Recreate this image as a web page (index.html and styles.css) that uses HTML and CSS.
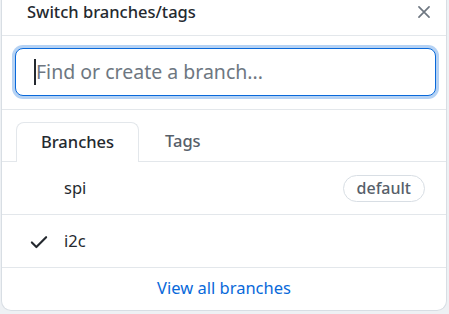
FILE: index.html
```html
<!DOCTYPE html>
<html>
<head>
	<link rel="stylesheet" href="styles.css">
</head>
<body>

	<div class="panel">
		<div class="header">
			<span class="title">Switch branches/tags</span>
			<button class="close">
				<svg width="18" height="18" viewBox="0 0 16 16"><path d="M3.5 3.5l9 9M12.5 3.5l-9 9" stroke="#6e7781" stroke-width="1.5" stroke-linecap="round" fill="none"/></svg>
			</button>
		</div>

		<div class="search">
			<div class="inputBox">
				<input class="filter" type="text" placeholder="Find or create a branch...">
				<span class="caret"></span>
			</div>
		</div>

		<div class="tabs">
			<div class="tab active">Branches</div>
			<div class="tab">Tags</div>
		</div>

		<div class="row">
			<span class="check"></span>
			<span class="name">spi</span>
			<span class="label">default</span>
		</div>
		<div class="row">
			<span class="check">
				<svg width="20" height="20" viewBox="0 0 16 16"><path d="M2.3 8.4l3.6 3.6 7.8-7.8" stroke="#24292f" stroke-width="1.7" stroke-linecap="round" stroke-linejoin="round" fill="none"/></svg>
			</span>
			<span class="name">i2c</span>
		</div>

		<div class="footer">
			<a href="#" class="viewAll">View all branches</a>
		</div>
	</div>

</body>
</html>
```

FILE: styles.css
```css
body {
	margin: 0;
	background-color: #eef1f4;
	font-family: "Noto Sans", "Open Sans", sans-serif;
	color: #24292f;
}

.panel {
	margin-left: 1px;
	width: 446px;
	height: 311px;
	box-sizing: border-box;
	background-color: white;
	border: 1px solid #d8dee4;
	border-top: none;
	border-radius: 0 0 10px 10px;
}

.header {
	height: 36px;
	box-sizing: border-box;
	border-bottom: 1px solid #e3e7eb;
	display: flex;
	align-items: center;
	justify-content: space-between;
	padding: 0 11px 12px 25px;
}

.title {
	font-size: 16.5px;
	font-weight: 500;
}

.close {
	background: none;
	border: none;
	padding: 0;
	width: 22px;
	height: 22px;
	display: flex;
	align-items: center;
	justify-content: center;
}

.search {
	height: 74px;
	box-sizing: border-box;
	padding: 12px 10px 0 13px;
	border-bottom: 1px solid #e3e7eb;
}

.inputBox {
	position: relative;
}

.filter {
	width: 100%;
	height: 48px;
	box-sizing: border-box;
	border: 1px solid #0969da;
	border-radius: 8px;
	box-shadow: 0 0 0 3px rgba(9, 105, 218, 0.3);
	outline: none;
	padding: 0 0 2px 20px;
	font-family: "Noto Sans", "Open Sans", sans-serif;
	font-size: 19.5px;
	color: #24292f;
}

.filter::placeholder {
	color: #6e7781;
}

.caret {
	position: absolute;
	left: 19px;
	top: 11px;
	width: 2px;
	height: 26px;
	background-color: #24292f;
}

.tabs {
	display: flex;
	padding: 12px 0 0 14px;
	border-bottom: 1px solid #e3e7eb;
	height: 52px;
	box-sizing: border-box;
}

.tab {
	box-sizing: border-box;
	display: flex;
	align-items: center;
	justify-content: center;
	font-size: 16.5px;
	font-weight: 500;
	color: #57606a;
	padding: 0 27px 2px 26px;
}

.tab.active {
	width: 123px;
	padding: 0 0 2px 0;
	color: #24292f;
	background-color: white;
	border: 1px solid #e3e7eb;
	border-bottom: none;
	border-radius: 8px 8px 0 0;
	margin-bottom: -1px;
}

.row {
	display: flex;
	align-items: center;
	height: 53px;
	box-sizing: border-box;
	padding: 1px 21px 0 27px;
	border-bottom: 1px solid #e3e7eb;
}

.row:last-of-type {
	border-bottom: none;
}

.check {
	width: 35px;
	display: flex;
	align-items: center;
}

.name {
	flex: 1;
	font-size: 16.5px;
	padding-bottom: 3px;
}

.label {
	font-size: 16px;
	font-weight: 500;
	color: #57606a;
	border: 1px solid #d8dee4;
	border-radius: 14px;
	padding: 1px 13px 2px 13px;
	line-height: 22px;
}

.footer {
	text-align: center;
	padding-top: 8px;
}

.viewAll {
	color: #0969da;
	font-size: 16.5px;
	text-decoration: none;
}
```
